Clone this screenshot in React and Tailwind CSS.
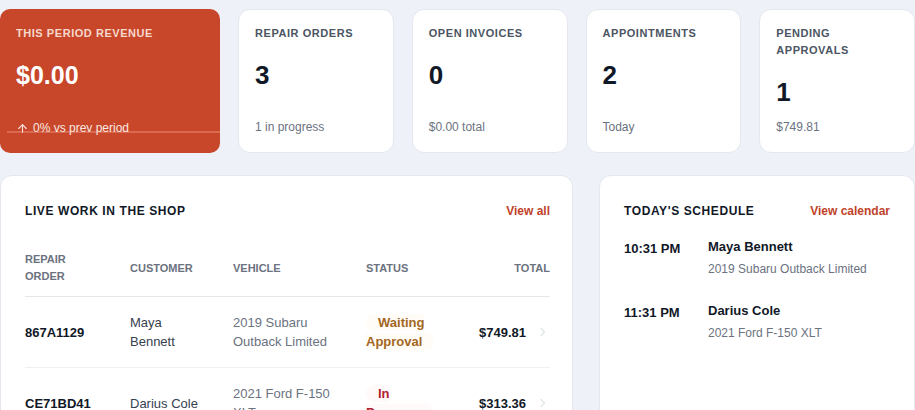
import React from "react";
import { ArrowUp } from "lucide-react";

const stats = [
  { label: "Repair Orders", value: "3", sub: "1 in progress" },
  { label: "Open Invoices", value: "0", sub: "$0.00 total" },
  { label: "Appointments", value: "2", sub: "Today" },
  { label: "Pending Approvals", value: "1", sub: "$749.81" },
];

const orders = [
  {
    ro: "867A1129",
    customer: "Maya Bennett",
    vehicle: "2019 Subaru Outback Limited",
    status: "Waiting Approval",
    statusClass: "text-[#a3661f] bg-[#fffcf8]",
    total: "$749.81",
  },
  {
    ro: "CE71BD41",
    customer: "Darius Cole",
    vehicle: "2021 Ford F-150 XLT",
    status: "In Progress",
    statusClass: "text-[#b3222f] bg-[#fff9f9]",
    total: "$313.36",
  },
];

const schedule = [
  { time: "10:31 PM", name: "Maya Bennett", vehicle: "2019 Subaru Outback Limited" },
  { time: "11:31 PM", name: "Darius Cole", vehicle: "2021 Ford F-150 XLT" },
];

const Chevron = () => (
  <svg width="16" height="16" viewBox="0 0 16 16" fill="none" className="ml-2 shrink-0">
    <path d="M7 4.5 10.5 8 7 11.5" stroke="#e3e6ea" strokeWidth="1.4" strokeLinecap="round" strokeLinejoin="round" />
  </svg>
);

const StatCard = ({ label, value, sub }) => (
  <div className="flex flex-col bg-white border border-[#e4e8ee] rounded-[12px] pt-[15px] pb-[17px] px-4">
    <div className="text-[11px] leading-[17px] font-bold uppercase tracking-[0.05em] text-[#4b5563]">
      {label}
    </div>
    <div className="mt-[17px] text-[26px] leading-[32px] font-bold text-[#111827]">{value}</div>
    <div className="mt-auto text-[12px] leading-[16px] text-[#6b7280]">{sub}</div>
  </div>
);

export default function App() {
  return (
    <div className="min-h-screen bg-[#eef2f8] font-['Liberation_Sans',Arial,sans-serif] w-[915px]">
      {/* stat cards */}
      <div className="grid grid-cols-[220px_repeat(4,1fr)] gap-[18px] pt-[9px]">
        <div className="relative flex flex-col bg-[#c8472a] rounded-[10px] pt-[16px] pb-[17px] px-4 h-[144px] overflow-hidden">
          <div className="text-[11px] leading-[17px] font-bold uppercase tracking-[0.05em] text-[#f6d8cd]">
            This Period Revenue
          </div>
          <div className="mt-[17px] text-[25px] leading-[32px] font-bold text-white">$0.00</div>
          <div className="absolute left-[7px] right-0 top-[122px] h-[2px] bg-[#d9694f]" />
          <div className="relative mt-auto flex items-center gap-[4px] text-[12px] leading-[16px] text-[#fbe7e0]">
            <ArrowUp size={13} strokeWidth={2} />
            <span>0% vs prev period</span>
          </div>
        </div>
        {stats.map((s) => (
          <StatCard key={s.label} {...s} />
        ))}
      </div>

      {/* lower panels */}
      <div className="grid grid-cols-[573px_1fr] gap-[26px] mt-[22px]">
        <div className="bg-white border border-[#e4e8ee] rounded-[12px] pl-6 pr-[22px] pt-[27px] pb-4">
          <div className="flex items-center justify-between">
            <h2 className="text-[12px] leading-[16px] font-bold uppercase tracking-[0.05em] text-[#111827]">
              Live Work in the Shop
            </h2>
            <a className="text-[12px] leading-[16px] font-bold text-[#c0432a]">View all</a>
          </div>

          <div className="mt-[21px]">
            <div className="flex items-center border-b border-[#e5e7eb] py-[11px] text-[11px] leading-[17px] font-bold uppercase text-[#6b7280]">
              <div className="w-[105px] pr-[40px]">Repair Order</div>
              <div className="w-[103px]">Customer</div>
              <div className="w-[133px]">Vehicle</div>
              <div className="w-[94px]">Status</div>
              <div className="flex-1 text-right">Total</div>
            </div>
            {orders.map((o) => (
              <div
                key={o.ro}
                className="flex items-center border-b border-[#eef0f3] py-[16px] text-[13px] leading-[19px]"
              >
                <div className="w-[105px] font-bold text-[#111827]">{o.ro}</div>
                <div className="w-[103px] pr-[30px] text-[#374151]">{o.customer}</div>
                <div className="w-[133px] pr-[23px] text-[#6b7280]">{o.vehicle}</div>
                <div className="w-[94px] pr-[18px]">
                  <span className={`px-3 py-[1px] rounded-full font-bold ${o.statusClass}`}>{o.status}</span>
                </div>
                <div className="flex-1 flex items-center justify-end font-bold text-[#111827]">
                  {o.total}
                  <Chevron />
                </div>
              </div>
            ))}
          </div>
        </div>

        <div className="bg-white border border-[#e4e8ee] rounded-[12px] px-6 pt-[27px] pb-6">
          <div className="flex items-center justify-between">
            <h2 className="text-[12px] leading-[16px] font-bold uppercase tracking-[0.05em] text-[#111827]">
              Today's Schedule
            </h2>
            <a className="text-[12px] leading-[16px] font-bold text-[#c0432a]">View calendar</a>
          </div>
          <div className="mt-[19px] flex flex-col gap-[25px]">
            {schedule.map((s) => (
              <div key={s.time} className="flex">
                <div className="w-[84px] pt-[2px] text-[13px] leading-[18px] font-bold text-[#111827]">{s.time}</div>
                <div>
                  <div className="text-[13px] leading-[18px] font-bold text-[#111827]">{s.name}</div>
                  <div className="mt-[5px] text-[12px] leading-[16px] text-[#6b7280]">{s.vehicle}</div>
                </div>
              </div>
            ))}
          </div>
        </div>
      </div>
    </div>
  );
}
